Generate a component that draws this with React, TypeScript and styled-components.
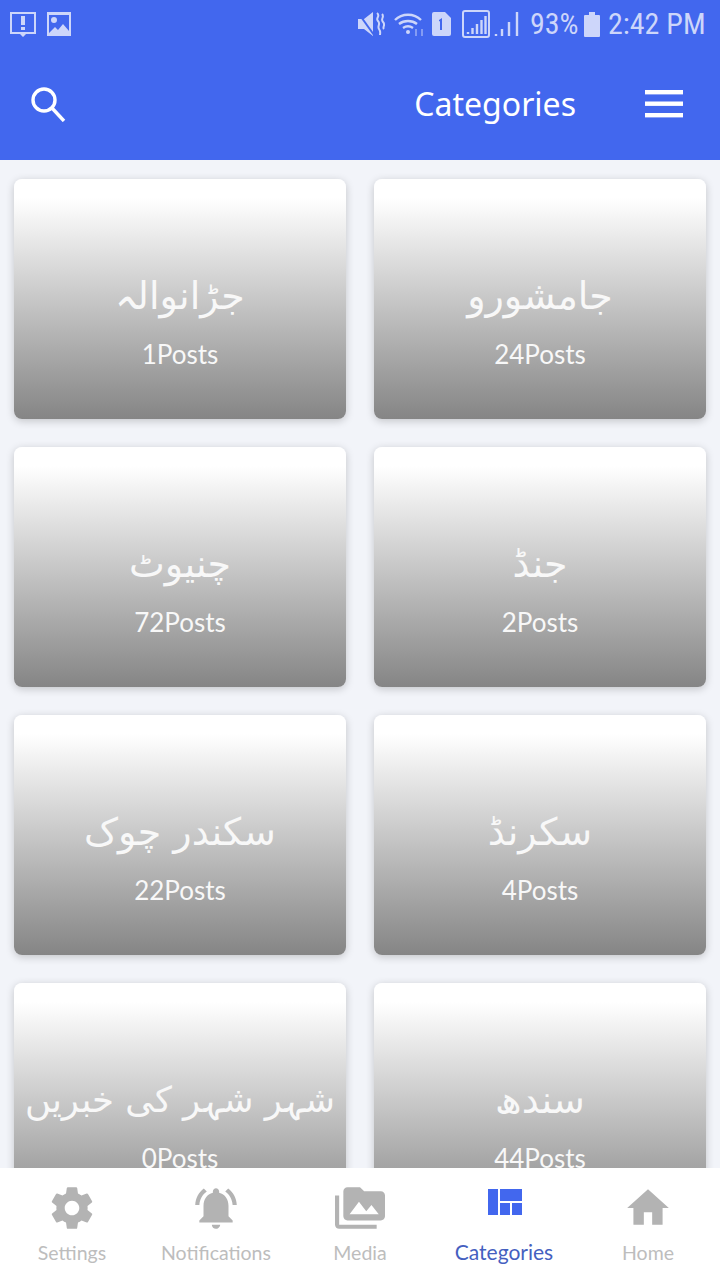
import React from 'react';
import styled, { createGlobalStyle } from 'styled-components';

const categories = [
  { name: 'جڑانوالہ', count: 1 },
  { name: 'جامشورو', count: 24 },
  { name: 'چنیوٹ', count: 72 },
  { name: 'جنڈ', count: 2 },
  { name: 'سکندر چوک', count: 22 },
  { name: 'سکرنڈ', count: 4 },
  { name: 'شہر شہر کی خبریں', count: 0, size: 35.5 },
  { name: 'سندھ', count: 44 },
];

const navPaths: Record<string, string> = {
  Settings:
    'M19.43 12.98c.04-.32.07-.64.07-.98s-.03-.66-.07-.98l2.11-1.65c.19-.15.24-.42.12-.64l-2-3.46c-.12-.22-.39-.3-.61-.22l-2.49 1c-.52-.4-1.08-.73-1.69-.98l-.38-2.65C14.46 2.18 14.25 2 14 2h-4c-.25 0-.46.18-.49.42l-.38 2.65c-.61.25-1.17.59-1.69.98l-2.49-1c-.23-.09-.49 0-.61.22l-2 3.46c-.13.22-.07.49.12.64l2.11 1.65c-.04.32-.07.65-.07.98s.03.66.07.98l-2.11 1.65c-.19.15-.24.42-.12.64l2 3.46c.12.22.39.3.61.22l2.49-1c.52.4 1.08.73 1.69.98l.38 2.65c.03.24.24.42.49.42h4c.25 0 .46-.18.49-.42l.38-2.65c.61-.25 1.17-.59 1.69-.98l2.49 1c.23.09.49 0 .61-.22l2-3.46c.12-.22.07-.49-.12-.64l-2.11-1.65zM12 15.5c-1.93 0-3.5-1.57-3.5-3.5s1.57-3.5 3.5-3.5 3.5 1.57 3.5 3.5-1.57 3.5-3.5 3.5z',
  Notifications:
    'M7.58 4.08L6.15 2.65C3.75 4.48 2.17 7.3 2.03 10.5h2c.15-2.65 1.51-4.97 3.55-6.42zm12.39 6.42h2c-.15-3.2-1.73-6.02-4.12-7.85l-1.42 1.43c2.02 1.45 3.39 3.77 3.54 6.42zM18 11c0-3.07-1.64-5.64-4.5-6.32V4c0-.83-.67-1.5-1.5-1.5s-1.5.67-1.5 1.5v.68C7.63 5.36 6 7.92 6 11v5l-2 2v1h16v-1l-2-2v-5zm-6 11c.14 0 .27-.01.4-.04.65-.14 1.18-.58 1.44-1.18.1-.24.15-.5.15-.78h-4c.01 1.1.9 2 2.01 2z',
  Media:
    'M2 6H0v5h.01L0 20c0 1.1.9 2 2 2h18v-2H2V6zm20-2h-8l-2-2H6c-1.1 0-1.99.9-1.99 2L4 16c0 1.1.9 2 2 2h16c1.1 0 2-.9 2-2V6c0-1.1-.9-2-2-2zM7 15l4.5-6 3.5 4.51 2.5-3.01L21 15H7z',
  Categories: 'M10 18h5v-6h-5v6zm-6 0h5V5H4v13zm12 0h5v-6h-5v6zM10 5v6h11V5H10z',
  Home: 'M10 20v-6h4v6h5v-8h3L12 3 2 12h3v8z',
};

const GlobalStyle = createGlobalStyle`
  html, body {
    margin: 0;
    padding: 0;
    background: #f2f4f9;
  }
`;

const Screen = styled.div`
  display: flex;
  flex-direction: column;
  width: 720px;
  height: 1280px;
  overflow: hidden;
  font-family: 'Lato', 'Noto Sans', sans-serif;
`;

const Header = styled.header`
  flex: none;
  height: 160px;
  display: flex;
  flex-direction: column;
  background: #4267ee;
`;

const StatusBar = styled.div`
  height: 48px;
  display: flex;
  align-items: center;
  justify-content: space-between;
  padding: 0 14px 0 9px;
  color: #cdd6fa;
`;

const StatusGroup = styled.div`
  display: flex;
  align-items: center;
`;

const StatusIcon = styled.svg<{ $gap?: number }>`
  flex: none;
  margin-left: ${({ $gap }) => $gap ?? 0}px;
`;

const StatusText = styled.span<{ $width: number; $gap: number }>`
  width: ${({ $width }) => $width}px;
  margin-left: ${({ $gap }) => $gap}px;
  font-family: 'Roboto', sans-serif;
  font-size: 30px;
  font-weight: 400;
  font-stretch: 80%;
  line-height: 48px;
  white-space: nowrap;
`;

const AppBar = styled.div`
  flex: 1;
  display: flex;
  align-items: center;
  padding: 0 37px 0 30px;
`;

const Title = styled.h1`
  margin: 0 69px 0 auto;
  font-family: 'Noto Sans', sans-serif;
  font-size: 32px;
  font-weight: 400;
  line-height: 44px;
  color: #fff;
`;

const Grid = styled.main`
  flex: 1;
  min-height: 0;
  overflow: hidden;
  display: grid;
  grid-template-columns: 332px 332px;
  grid-auto-rows: 240px;
  gap: 28px;
  padding: 19px 14px 0;
`;

const Card = styled.article`
  display: flex;
  flex-direction: column;
  align-items: center;
  padding-top: 90px;
  border-radius: 8px;
  background: linear-gradient(180deg, #fff 8%, #858585 100%);
  box-shadow: 0 2px 8px rgba(0, 0, 0, 0.2);
  color: #f8f8f8;
`;

const CategoryName = styled.div<{ $size?: number }>`
  direction: rtl;
  font-family: 'DejaVu Sans', sans-serif;
  font-size: ${({ $size }) => $size ?? 38}px;
  line-height: 54px;
  white-space: nowrap;
`;

const PostCount = styled.div`
  margin-top: 15px;
  font-size: 26px;
  line-height: 32px;
`;

const BottomNav = styled.nav`
  flex: none;
  height: 112px;
  display: grid;
  grid-template-columns: repeat(5, 144px);
  background: #fff;
`;

const NavItem = styled.div<{ $active?: boolean }>`
  display: flex;
  flex-direction: column;
  align-items: center;
  padding-top: ${({ $active }) => ($active ? '11px' : '15px')};
  color: ${({ $active }) => ($active ? '#4267ee' : '#b3b3b3')};
`;

const NavIcon = styled.svg<{ $active?: boolean }>`
  width: ${({ $active }) => ($active ? '48px' : '50px')};
  height: ${({ $active }) => ($active ? '48px' : '50px')};
`;

const NavLabel = styled.span<{ $active?: boolean }>`
  margin-top: ${({ $active }) => ($active ? '12px' : '7px')};
  font-size: ${({ $active }) => ($active ? '21px' : '19.5px')};
  line-height: 26px;
  color: ${({ $active }) => ($active ? '#4560c0' : '#bdbdbd')};
`;

const App = () => {
  return (
    <>
      <GlobalStyle />
      <Screen>
        <Header>
          <StatusBar>
            <StatusGroup>
              <StatusIcon width="28" height="28" viewBox="0 0 28 28" fill="currentColor">
                <path fillRule="evenodd" d="M1 2h26v22H17l-3 3-3-3H1zM3 4v18h22V4zM12 6h4v9h-4zM12 17h4v3h-4z" />
              </StatusIcon>
              <StatusIcon $gap={10} width="24" height="24" viewBox="0 0 24 24" fill="currentColor">
                <path fillRule="evenodd" d="M0 0h24v24H0zM2 21l6-6 3 3 5-6 6 7V3H2zM7 5a3 3 0 100 6 3 3 0 000-6z" />
              </StatusIcon>
            </StatusGroup>
            <StatusGroup>
              <StatusIcon width="27" height="28" viewBox="0 0 27 28" fill="currentColor">
                <path d="M0 9h6l9-7v24l-9-7H0z" />
                <path d="M1 4l15 21" stroke="#4267ee" strokeWidth="2" />
                <path d="M19 3c4 3-2 5 1 8s-1 5 1 8 1 4 1 6M24 4c3 3-2 5 1 8s-1 5 1 7" fill="none" stroke="currentColor" strokeWidth="2" />
              </StatusIcon>
              <StatusIcon $gap={9} width="31" height="28" viewBox="0 0 31 28" fill="none" stroke="currentColor" strokeWidth="2.4">
                <path d="M1 10c7-7 19-7 26 0M5 14c5-4 13-4 18 0M9 18c3-2 7-2 10 0" />
                <circle cx="14" cy="22" r="2" fill="currentColor" stroke="none" />
                <path d="M22 19v7M28 26v-7" strokeWidth="1.6" opacity=".6" />
              </StatusIcon>
              <StatusIcon $gap={6} width="20" height="24" viewBox="0 0 20 24">
                <path d="M3 0h11l6 6v16a2 2 0 01-2 2H3a2 2 0 01-2-2V2a2 2 0 012-2z" fill="currentColor" />
                <path d="M8 8l3-2v12H9V9l-1 .6z" fill="#4267ee" />
              </StatusIcon>
              <StatusIcon $gap={11} width="28" height="28" viewBox="0 0 28 28" fill="none" stroke="currentColor">
                <rect x="1" y="1" width="26" height="26" rx="2" strokeWidth="2" />
                <path d="M6 24v-2M10.500 24v-6M15 24v-10M19.500 24V10M23.500 24V6" strokeWidth="2.4" />
              </StatusIcon>
              <StatusIcon $gap={4} width="26" height="30" viewBox="0 0 26 30" fill="none" stroke="currentColor" strokeWidth="2.4">
                <path d="M2 27v-2M8 27v-7M15 27V13M23 27V3" />
              </StatusIcon>
              <StatusText $width={47} $gap={10}>93%</StatusText>
              <StatusIcon $gap={7} width="16" height="25" viewBox="0 0 16 25" fill="currentColor">
                <path d="M5 0h6v3h4a1 1 0 011 1v20a1 1 0 01-1 1H1a1 1 0 01-1-1V4a1 1 0 011-1h4z" />
              </StatusIcon>
              <StatusText $width={98} $gap={8}>2:42 PM</StatusText>
            </StatusGroup>
          </StatusBar>
          <AppBar>
            <svg width="36" height="36" viewBox="0 0 36 36" fill="none" stroke="#fff" strokeWidth="3.4">
              <circle cx="14" cy="14" r="11" />
              <path d="M22 22l12 13" />
            </svg>
            <Title>Categories</Title>
            <svg width="38" height="28" viewBox="0 0 38 28" fill="#fff">
              <rect y="0" width="38" height="4.4" />
              <rect y="11.5" width="38" height="4.4" />
              <rect y="23" width="38" height="4.4" />
            </svg>
          </AppBar>
        </Header>
        <Grid>
          {categories.map((category, index) => (
            <Card key={index}>
              <CategoryName $size={category.size}>{category.name}</CategoryName>
              <PostCount>{category.count}Posts</PostCount>
            </Card>
          ))}
        </Grid>
        <BottomNav>
          {Object.keys(navPaths).map((label) => (
            <NavItem key={label} $active={label === 'Categories'}>
              <NavIcon $active={label === 'Categories'} viewBox="0 0 24 24" fill="currentColor">
                <path d={navPaths[label]} />
              </NavIcon>
              <NavLabel $active={label === 'Categories'}>{label}</NavLabel>
            </NavItem>
          ))}
        </BottomNav>
      </Screen>
    </>
  );
};

export default App;
